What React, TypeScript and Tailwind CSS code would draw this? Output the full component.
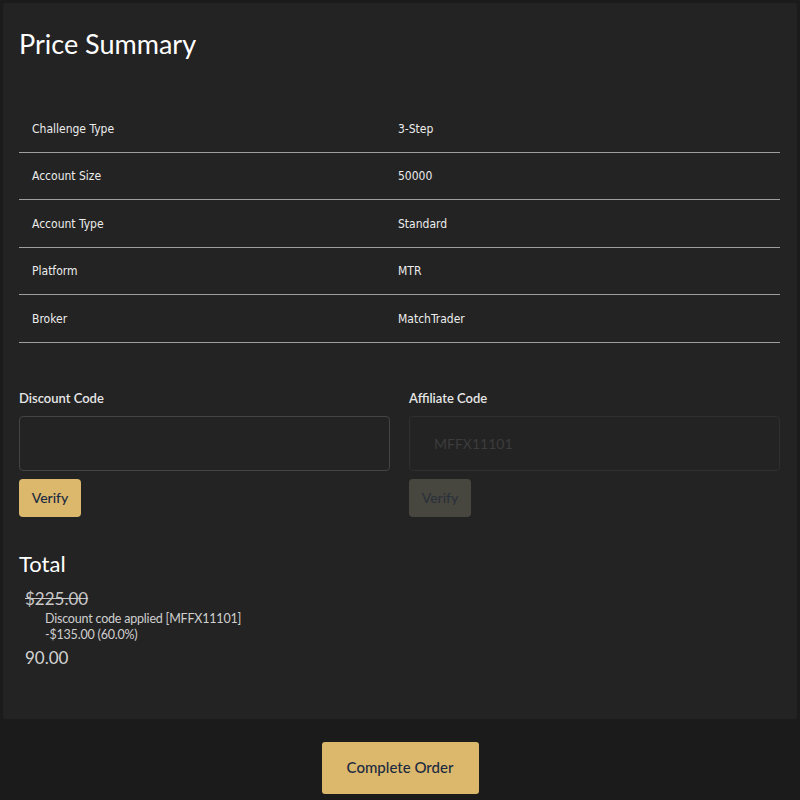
const rows = [
  { label: "Challenge Type", value: "3-Step" },
  { label: "Account Size", value: "50000" },
  { label: "Account Type", value: "Standard" },
  { label: "Platform", value: "MTR" },
  { label: "Broker", value: "MatchTrader" },
];

const condensed = { fontFamily: '"DejaVu Sans Condensed", "Liberation Sans Narrow", sans-serif' };

function CodeField({
  label,
  value,
  disabled,
}: {
  label: string;
  value?: string;
  disabled?: boolean;
}) {
  return (
    <div className="flex flex-col">
      <label className="text-[13px] font-semibold leading-[18px] text-[#e6e6e6]">{label}</label>
      <div
        className={
          disabled
            ? "mt-[9px] flex h-[55px] items-center rounded-[4px] border border-[#2f2f2f] px-6 text-[14px] text-[#3c3c3c]"
            : "mt-[9px] flex h-[55px] items-center rounded-[4px] border border-[#444444] px-6 text-[14px] text-[#ddd]"
        }
      >
        {value}
      </div>
      <button
        className={
          disabled
            ? "mt-2 h-[38px] w-[62px] rounded-[4px] bg-[#48473f] text-[14px] font-medium text-[#2b313b]"
            : "mt-2 h-[38px] w-[62px] rounded-[4px] bg-[#dcb86c] text-[14px] font-medium text-[#1b2a41]"
        }
      >
        Verify
      </button>
    </div>
  );
}

export default function App() {
  return (
    <div
      className="flex min-h-[800px] flex-col bg-[#1b1b1b] p-[3px]"
      style={{ fontFamily: 'Lato, "Open Sans", sans-serif' }}
    >
      <div className="flex flex-col rounded-[3px] bg-[#232323] pb-[51px] pl-4 pr-[17px] pt-[25px]">
        <h1 className="text-[27px] leading-[32px] text-white">Price Summary</h1>

        <div className="mt-[45px] flex flex-col" style={condensed}>
          {rows.map((r) => (
            <div
              key={r.label}
              className="grid h-[47.5px] grid-cols-[366px_1fr] items-center border-b border-[#9e9e9e] pt-px text-[12px] font-medium text-[#ececec]"
            >
              <span className="px-[13px]">{r.label}</span>
              <span className="px-[13px]">{r.value}</span>
            </div>
          ))}
        </div>

        <div className="mt-[46px] grid grid-cols-2 gap-[19px]">
          <CodeField label="Discount Code" />
          <CodeField label="Affiliate Code" value="MFFX11101" disabled />
        </div>

        <div className="mt-[33px] flex flex-col">
          <h2 className="text-[22px] leading-[28px] text-white">Total</h2>
          <div className="mt-[11px] pl-[6px]">
            <div className="text-[17px] leading-[20px] text-[#c8c8c8] line-through">$225.00</div>
            <div className="mt-[2px] pl-5 text-[12.5px] leading-[16px] tracking-[-0.2px] text-[#cfcfcf]">
              <div>Discount code applied [MFFX11101]</div>
              <div>-$135.00 (60.0%)</div>
            </div>
            <div className="mt-[5px] text-[17px] leading-[20px] text-[#d4d4d4]">90.00</div>
          </div>
        </div>
      </div>

      <div className="flex justify-center pt-[23px]">
        <button className="h-[52px] w-[157px] rounded-[3px] bg-[#dcb86c] text-[15px] font-medium text-[#1b2a41]">
          Complete Order
        </button>
      </div>
    </div>
  );
}
